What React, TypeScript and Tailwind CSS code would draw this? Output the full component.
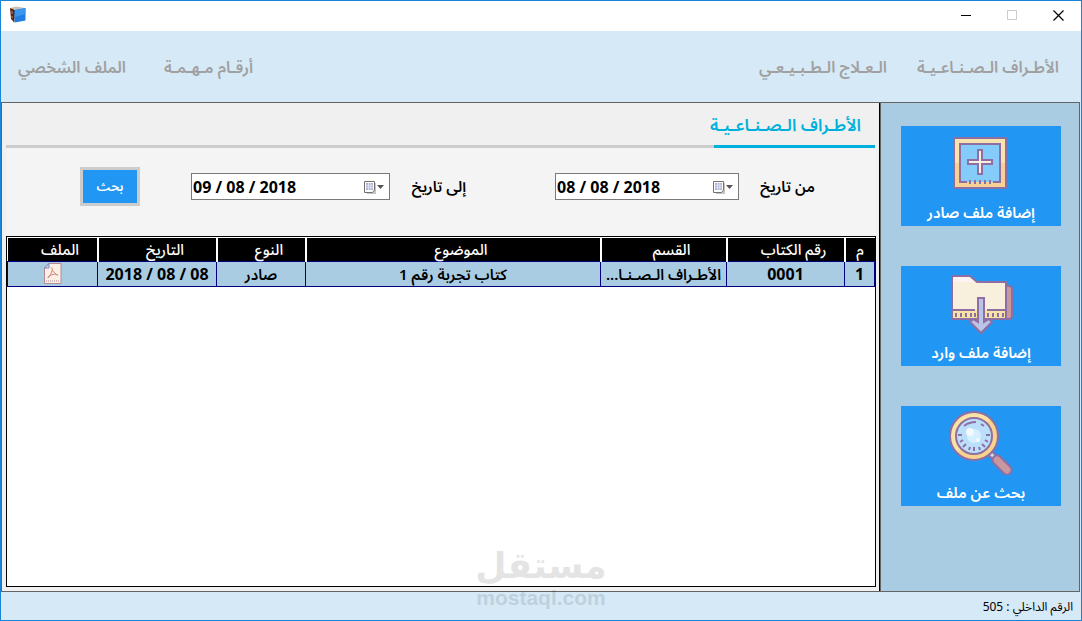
import React, { useState } from 'react';

type FileRecord = {
  id: number;
  bookNo: string;
  section: string;
  subject: string;
  type: string;
  date: string;
};

const records: FileRecord[] = [
  {
    id: 1,
    bookNo: '0001',
    section: 'الأطـراف الـصـنـا...',
    subject: 'كتاب تجربة رقم 1',
    type: 'صادر',
    date: '2018 / 08 / 08',
  },
];

const AppIcon = () => (
  <svg width="18" height="18" viewBox="0 0 18 18">
    <path d="M1 2 L7 0.5 L16 2 L6 4 Z" fill="#cdbfb2" />
    <path d="M1 2 L5 3.5 V16 L2 13 Z" fill="#5a2413" />
    <path d="M3 5 V8 M3 10 V12" stroke="#c58745" strokeWidth="1" />
    <path d="M5 4 L16.5 2 V14.5 L6 16.5 Z" fill="#1f7ee0" />
    <path d="M6 4 L16.5 2 V8 L6 11 Z" fill="#3b96ee" />
    <path d="M5 4 V16.2" stroke="#0a3270" strokeWidth="1" />
  </svg>
);

const AddIcon = () => (
  <svg className="shrink-0" width="64" height="64" viewBox="0 0 64 64">
    <rect x="5" y="7" width="52" height="50" rx="1" fill="#f7e3ac" />
    <path d="M5 32H57V57H5Z" fill="#f8d294" />
    <rect x="5" y="7" width="52" height="50" rx="1" fill="none" stroke="#8f6fa3" strokeWidth="2" />
    <rect x="11" y="13" width="40" height="38" fill="#86ccfa" />
    <path d="M18 51H11V13H51V51H44" fill="none" stroke="#8f6fa3" strokeWidth="2" />
    <path d="M21 49V53M26 49V53M31 49V53M36 49V53M41 49V53" stroke="#8f6fa3" strokeWidth="2" />
    <path d="M29 19H33V29H43V33H33V43H29V33H19V29H29Z" fill="#f9efdf" stroke="#8f6fa3" strokeWidth="2" />
  </svg>
);

const FolderIcon = () => (
  <svg className="shrink-0" width="64" height="64" viewBox="0 0 64 64">
    <path d="M56 15H61L63 17V46L61 48H56Z" fill="#c9979f" stroke="#8f6fa3" strokeWidth="2" />
    <path d="M4 5H21L28 11H57V48H4L3 47V6Z" fill="#f9efdd" />
    <path d="M4 6H21L26 11H4Z" fill="#fdf3f0" />
    <path d="M3 39H57V48H3Z" fill="#f7e3a4" />
    <path d="M4 5H21L28 11H57V48H4L3 47V6Z" fill="none" stroke="#8f6fa3" strokeWidth="2" strokeLinejoin="round" />
    <path d="M3 39H26M38 39H57" stroke="#8f6fa3" strokeWidth="2" />
    <path d="M7 42V46M12 42V46M17 42V46M22 42V46M26 42V46M39 42V46M44 42V46M49 42V46M54 42V46" stroke="#8f6fa3" strokeWidth="2" />
    <path d="M29 27H35V51L40 48L43 51L32 62L21 51L24 48L29 51Z" fill="#b9c4e6" stroke="#8f6fa3" strokeWidth="2" />
  </svg>
);

const MagnifierIcon = () => (
  <svg className="shrink-0" width="64" height="64" viewBox="0 0 64 64">
    <path d="M40 41L48 49" stroke="#8f6fa3" strokeWidth="7" />
    <path d="M41 42L46 47" stroke="#d4dcef" strokeWidth="3" />
    <path d="M48 49L58 59" stroke="#8f6fa3" strokeWidth="11" strokeLinecap="round" />
    <path d="M48 49L58 59" stroke="#c9979f" strokeWidth="7" strokeLinecap="round" />
    <circle cx="25" cy="25" r="24" fill="#f9e2a4" />
    <path d="M42 8A24 24 0 0 1 8 42Z" fill="#f8d38b" />
    <circle cx="25" cy="25" r="24" fill="none" stroke="#8f6fa3" strokeWidth="2" />
    <circle cx="25" cy="25" r="18" fill="#bbdffa" stroke="#8f6fa3" strokeWidth="2" />
    <circle cx="25" cy="25" r="7" fill="#d5f0fd" />
    <circle cx="21" cy="21" r="4" fill="#f3f8fc" />
    <circle cx="29" cy="29" r="2" fill="#f3f8fc" />
    <path
      d="M15 15Q20 11 27 11M32 13L35 15M9 24H13M11 31L14 29M14 36L17 33M20 39L21 36M25 40V36M31 39L30 36M36 36L33 33M39 31L36 29M41 24H37"
      fill="none"
      stroke="#8f6fa3"
      strokeWidth="2"
    />
  </svg>
);

const CalendarIcon = () => (
  <svg width="22" height="16" viewBox="0 0 22 16">
    <path d="M2 4H13V15H4Z" fill="#c9c4c4" />
    <path d="M1.5 2.5H11.5V11L9.5 13.5H1.5Z" fill="#fff" stroke="#77706f" strokeWidth="1" />
    <path d="M3 4H10V11H3Z" fill="#a9b4d4" />
    <path d="M5.5 4V11M7.8 4V11M3 6.3H10M3 8.7H10" stroke="#e8ecf7" strokeWidth="0.8" />
    <path d="M14 6H21L17.5 10Z" fill="#555" />
  </svg>
);

const PdfIcon = () => (
  <svg width="18" height="21" viewBox="0 0 18 21">
    <path d="M5 0.5H17V20.5H0.5V5Z" fill="#fbf0e6" stroke="#b58a94" strokeWidth="1" />
    <path d="M5 0.5V5H0.5Z" fill="#cfe0f6" stroke="#7d83b5" strokeWidth="1" />
    <path
      d="M7 5Q9 4 8 8Q7 12 4 15Q3 14 7 12Q11 10 14 12Q13 13 8 7"
      fill="none"
      stroke="#d0877e"
      strokeWidth="1"
    />
    <path d="M2 18H16" stroke="#a8868f" strokeWidth="1" strokeDasharray="1 1" />
  </svg>
);

const sideActions = [
  { label: 'إضافة ملف صادر', Icon: AddIcon },
  { label: 'إضافة ملف وارد', Icon: FolderIcon },
  { label: 'بحث عن ملف', Icon: MagnifierIcon },
];

const TitleBar = () => (
  <header dir="ltr" className="flex h-[30px] shrink-0 items-center justify-between bg-white pb-0.5 pl-2">
    <AppIcon />
    <div className="flex">
      <button aria-label="تصغير" className="flex h-7 w-[46px] items-center justify-center">
        <svg width="10" height="10" viewBox="0 0 10 10"><path d="M0 5.5H10" stroke="#000" /></svg>
      </button>
      <button aria-label="تكبير" disabled className="flex h-7 w-[46px] items-center justify-center">
        <svg width="10" height="10" viewBox="0 0 10 10"><path d="M0.5 0.5H9.5V9.5H0.5Z" fill="none" stroke="#ccc" /></svg>
      </button>
      <button aria-label="إغلاق" className="flex h-7 w-[46px] items-center justify-center">
        <svg width="11" height="11" viewBox="0 0 11 11"><path d="M0.5 0.5L10.5 10.5M10.5 0.5L0.5 10.5" stroke="#000" strokeWidth="1.2" /></svg>
      </button>
    </div>
  </header>
);

type DateFieldProps = {
  id: string;
  label: string;
  value: string;
  onChange: (value: string) => void;
  boxClass: string;
};

const DateField = ({ id, label, value, onChange, boxClass }: DateFieldProps) => (
  <div className="flex items-center gap-5">
    <label htmlFor={id} className="w-14 text-[15px] font-semibold whitespace-nowrap">{label}</label>
    <div dir="ltr" className={`flex h-[27px] items-center border border-[#7a7a7a] bg-white pr-1 ${boxClass}`}>
      <input
        id={id}
        value={value}
        onChange={(e) => onChange(e.target.value)}
        className="min-w-0 flex-1 pl-px text-base font-bold outline-none"
      />
      <CalendarIcon />
    </div>
  </div>
);

const headClass = 'border-r-2 border-white pl-4 text-[15px] leading-5 font-medium first:border-r-0 first:pl-0';
const cellClass = 'border border-[#000080] px-1';
const numberClass = 'border border-[#000080] px-1 text-base leading-5 font-bold';

const RecordsTable = () => (
  <table className="w-full table-fixed border-collapse text-center">
    <colgroup>
      <col className="w-[30px]" />
      <col className="w-[118px]" />
      <col className="w-[126px]" />
      <col />
      <col className="w-[89px]" />
      <col className="w-[119px]" />
      <col className="w-[90px]" />
    </colgroup>
    <thead>
      <tr className="h-[23px] bg-black text-white">
        <th className={headClass}>م</th>
        <th className={headClass}>رقم الكتاب</th>
        <th className={headClass}>القسم</th>
        <th className={headClass}>الموضوع</th>
        <th className={headClass}>النوع</th>
        <th className={headClass}>التاريخ</th>
        <th className={headClass}>الملف</th>
      </tr>
    </thead>
    <tbody>
      {records.map((r) => (
        <tr key={r.id} className="h-[25px] bg-[#a9cce3] text-[15px] leading-5 font-semibold whitespace-nowrap">
          <td className={numberClass}>{r.id}</td>
          <td className={numberClass}>{r.bookNo}</td>
          <td className={cellClass}>{r.section}</td>
          <td className={cellClass}>{r.subject}</td>
          <td className={cellClass}>{r.type}</td>
          <td className={numberClass} dir="ltr">{r.date}</td>
          <td className={cellClass}>
            <button aria-label="PDF" className="mx-auto block"><PdfIcon /></button>
          </td>
        </tr>
      ))}
    </tbody>
  </table>
);

const App: React.FC = () => {
  const [from, setFrom] = useState('08 / 08 / 2018');
  const [to, setTo] = useState('09 / 08 / 2018');

  return (
    <div
      dir="rtl"
      className="relative flex h-screen flex-col border border-[#1883d7] bg-[#d6e9f6] font-['Noto_Sans','Noto_Sans_Arabic','DejaVu_Sans',sans-serif] text-black"
    >
      <TitleBar />

      {/* Main menu */}
      <nav className="flex h-[71px] shrink-0 items-center justify-between pr-[22px] pl-[17px] text-base font-semibold text-[#a0a0a0]">
        <div className="flex gap-[30px]">
          <a href="#limbs">الأطـراف الـصـنـاعـيـة</a>
          <a href="#therapy">الـعـلاج الـطـبـيـعـي</a>
        </div>
        <div className="flex gap-[38px]">
          <a href="#numbers">أرقـام مـهـمـة</a>
          <a href="#profile">الملف الشخصي</a>
        </div>
      </nav>

      <div className="mr-px flex min-h-0 flex-1 border border-[#646464]">
        {/* Side actions */}
        <aside className="flex w-[199px] shrink-0 flex-col gap-10 border-l border-[#646464] bg-[#a9cce3] pt-[23px] pr-[18px] pl-5">
          {sideActions.map(({ label, Icon }) => (
            <button key={label} className="flex h-[100px] flex-col items-center bg-[#2196f3] pt-[5px] text-white">
              <Icon />
              <span className="mt-[5px] text-[15px] leading-6 font-semibold">{label}</span>
            </button>
          ))}
        </aside>

        <main className="flex min-w-0 flex-1 flex-col border-r border-black bg-[#f0f0f0] pr-[3px] pb-1 pl-1">
          <div className="mr-px flex h-[45px] shrink-0 items-stretch border-b-[3px] border-[#ccc]">
            <h1 className="-mb-[3px] flex w-[161px] items-center border-b-[3px] border-[#00b0dc] pt-0.5 pr-[14px] text-[17px] font-semibold whitespace-nowrap text-[#00b0dc]">
              الأطـراف الـصـنـاعـيـة
            </h1>
          </div>

          <form className="flex h-[88px] shrink-0 items-start bg-[#f4f4f4] pt-[19px] pr-[61px]" onSubmit={(e) => e.preventDefault()}>
            <div className="flex items-center">
              <DateField id="from" label="من تاريخ" value={from} onChange={setFrom} boxClass="w-[184px]" />
              <div className="mr-[89px]">
                <DateField id="to" label="إلى تاريخ" value={to} onChange={setTo} boxClass="w-[199px]" />
              </div>
              <button className="mr-[51px] h-[39px] w-[60px] border-[3px] border-[#ccc] bg-[#2196f3] text-[13px] font-semibold text-white">
                بحث
              </button>
            </div>
          </form>

          <section className="min-h-0 flex-1 border border-black bg-white pt-px">
            <RecordsTable />
          </section>
        </main>
      </div>

      <footer className="flex h-[28px] shrink-0 items-center pt-0.5 pr-2 text-xs">الرقم الداخلي : 505</footer>

      {/* Watermark */}
      <div className="pointer-events-none absolute bottom-[10px] left-[474px] flex w-[132px] flex-col items-center text-black opacity-10">
        <span className="font-['DejaVu_Sans',sans-serif] text-[36px] leading-10 font-bold">مستقل</span>
        <span dir="ltr" className="font-['Liberation_Sans',sans-serif] text-[21px] leading-6 font-bold">mostaql.com</span>
      </div>
    </div>
  );
};

export default App;
